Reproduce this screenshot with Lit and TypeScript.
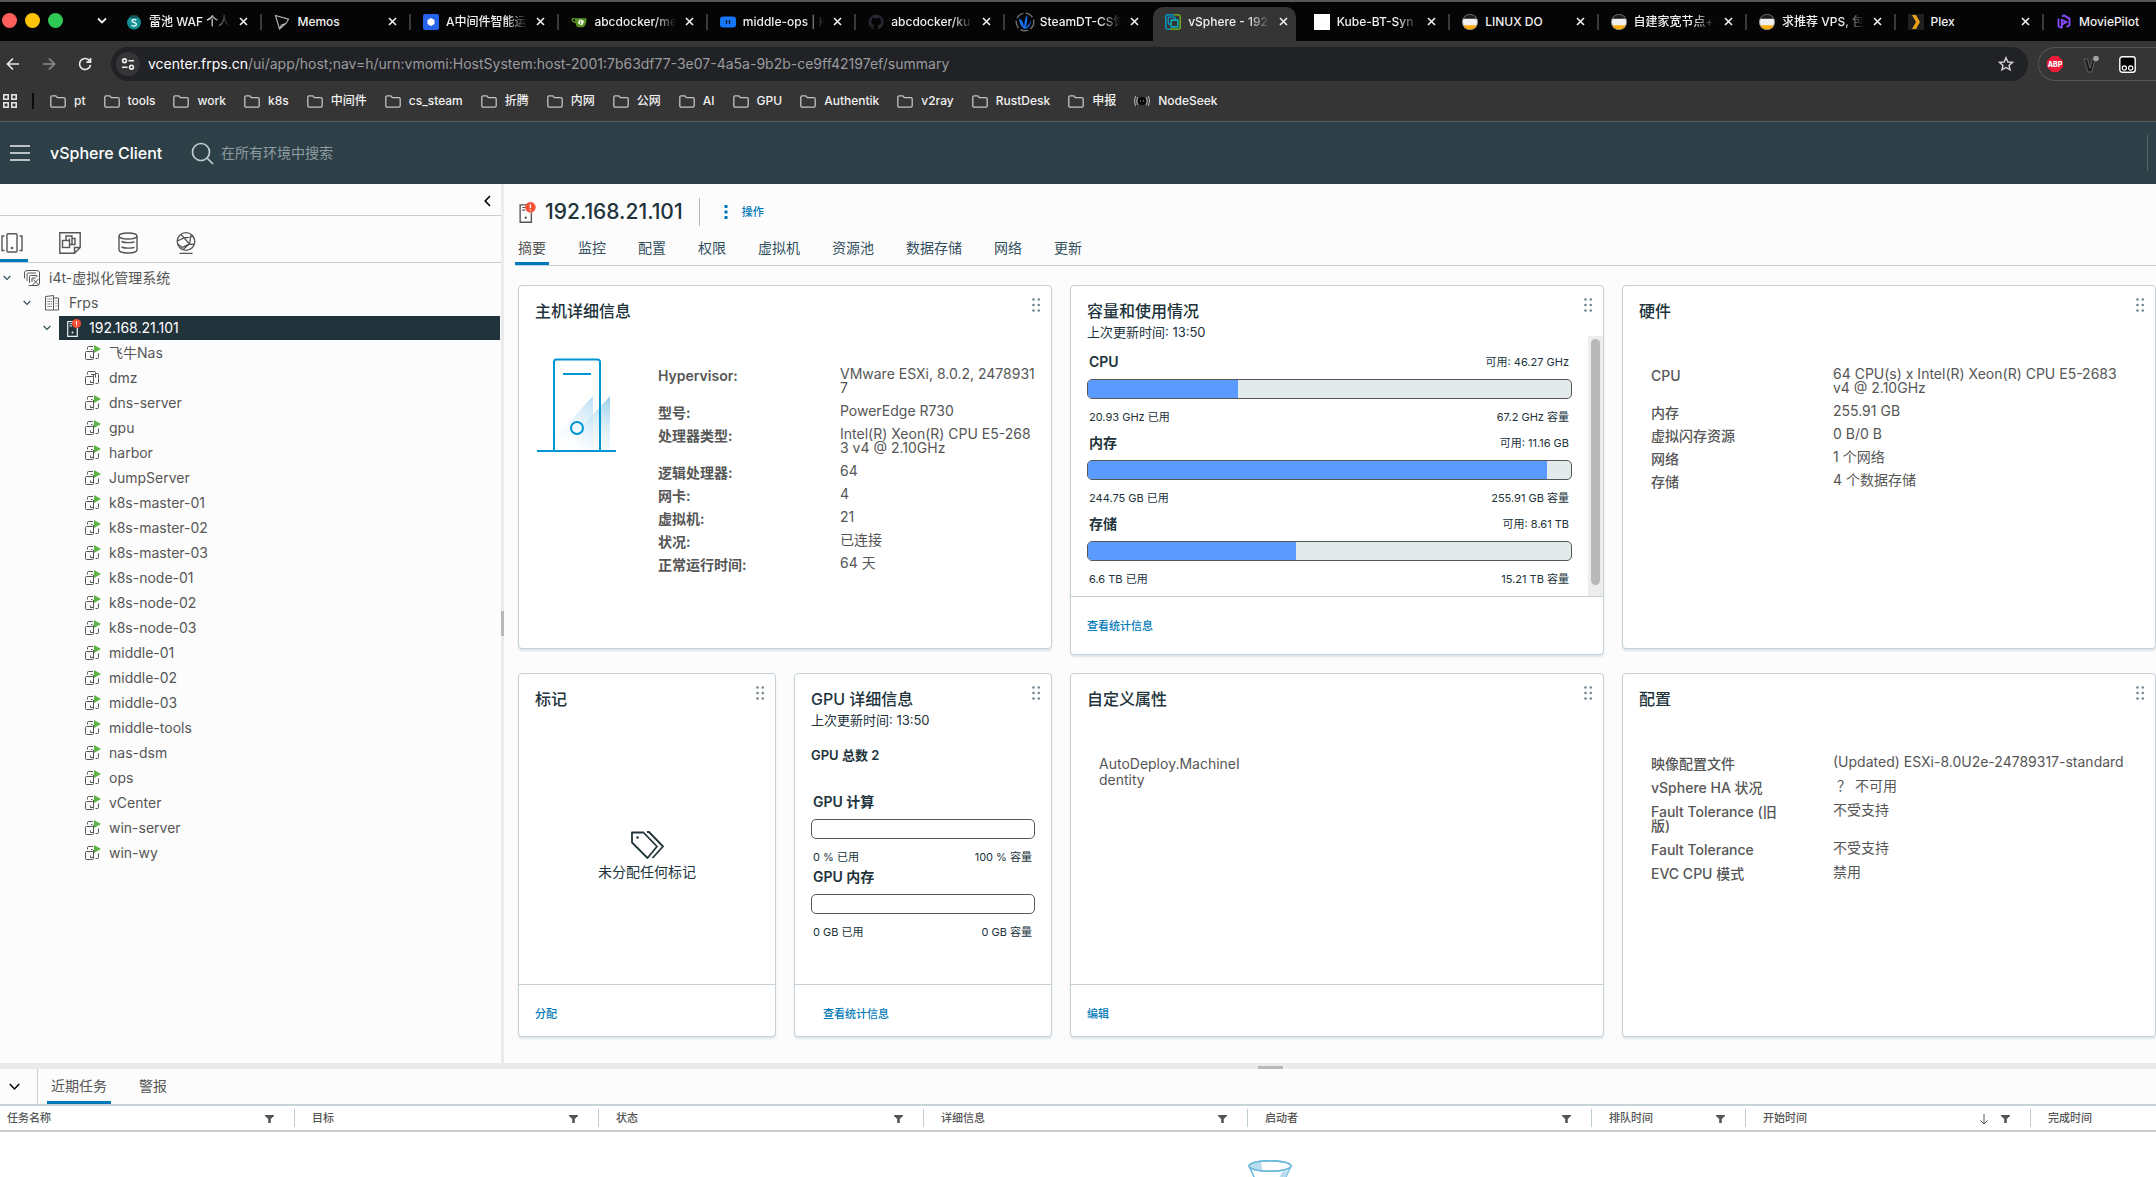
import { LitElement, html, css, svg, nothing, type TemplateResult } from "lit";
import { customElement, property } from "lit/decorators.js";
import { classMap } from "lit/directives/class-map.js";

const reset = css`
  * { box-sizing: border-box; }
  button { font: inherit; color: inherit; background: none; border: 0; padding: 0; margin: 0; text-align: left; cursor: pointer; }
  a { color: inherit; text-decoration: none; }
  input { font: inherit; color: inherit; background: none; border: 0; padding: 0; margin: 0; outline: 0; min-width: 0; }
  ul, dl, dd, dt, h1, h2, h3, p { margin: 0; padding: 0; list-style: none; font-size: inherit; font-weight: inherit; }
  svg { display: block; flex: none; }
`;

/* ---------- browser window ---------- */

const favicons: Record<string, TemplateResult> = {
  waf: html`<svg width="16" height="16" viewBox="0 0 16 16"><circle cx="8" cy="8.6" r="7" fill="#128f92"/><path d="M4 1.5h8l-1 2.4H5z" fill="#1c5557"/><path d="M10.4 6.2C9.2 5.2 6 5.2 6 7s4.4 1.300 4.400 3.300S7 12.600 5.500 11.200" fill="none" stroke="#d9f5f2" stroke-width="1.500"/></svg>`,
  memos: html`<svg width="16" height="16" viewBox="0 0 16 16" fill="none" stroke="#b9b9b9" stroke-width="1.1"><path d="M1.500 1.500 14.500 5.200 12 9.500 5.500 15 Z M5.500 15 7.500 11 12 9.500"/></svg>`,
  mid: html`<svg width="16" height="16" viewBox="0 0 16 16"><rect width="16" height="16" rx="2" fill="#2563eb"/><path d="M8 4l3.500 2v4L8 12l-3.500-2V6z" fill="#fff"/></svg>`,
  gitea: html`<svg width="16" height="16" viewBox="0 0 16 16"><path d="M4 4.200h11.500c0 5-1.500 9-4 9H7.500C5.500 13.200 4.800 10.500 4.500 9 1.800 9 .5 7.200.5 5.500S2 3.800 4 4.200z" fill="#5a9523"/><path d="M2 5.500c0 1 .8 2 2.200 2.200L4 5.300c-1-.2-2-.2-2 .2z" fill="#060606"/><rect x="7.600" y="5.800" width="4.800" height="4.800" rx="1" transform="rotate(25 10 8)" fill="#fff"/><path d="M9.800 6.500v3.500" stroke="#5a9523"/></svg>`,
  ops: html`<svg width="16" height="16" viewBox="0 0 16 16"><rect y="2.500" width="16" height="11" rx="3" fill="#1677ff"/><path d="M6.500 6v4M9.500 6v4" stroke="#04142c" stroke-width="1.300"/></svg>`,
  github: html`<svg width="16" height="16" viewBox="0 0 16 16"><path d="M8 .6a7.500 7.500 0 0 0-2.400 14.600c.4.100.5-.2.500-.4v-1.400c-2.100.5-2.500-.9-2.500-.9-.3-.9-.8-1.100-.8-1.100-.7-.5 0-.5 0-.5.800.1 1.200.8 1.200.8.700 1.200 1.800.8 2.200.6.100-.5.300-.8.500-1-1.700-.2-3.400-.8-3.400-3.700 0-.8.300-1.500.8-2-.1-.2-.3-1 .1-2 0 0 .6-.2 2.100.8a7 7 0 0 1 3.800 0c1.400-1 2.100-.8 2.100-.8.400 1 .1 1.800.1 2 .5.500.8 1.200.8 2 0 2.900-1.800 3.500-3.500 3.700.3.200.5.700.5 1.400v2.100c0 .2.100.5.500.4A7.500 7.500 0 0 0 8 .6z" fill="#24292f"/></svg>`,
  steam: html`<svg width="20" height="20" viewBox="0 0 20 20" fill="none"><circle cx="10" cy="10" r="8.800" stroke="#6f6f6f" stroke-width="1.400" stroke-dasharray="8 2.500"/><path d="M4 6.500c3 1 4.500 4 5 9 1-5 0-8 3.500-12.500C12 8 12.500 11 10.500 16c3-2 4-5 5.500-8-.5 5-2 8-6 9C6 15 4.500 11 4 6.500z" fill="#1677ff"/></svg>`,
  vsphere: html`<svg width="16" height="16" viewBox="0 0 16 16" fill="none" stroke-width="1.300"><path d="M9 .8H2.500Q.8.8.8 2.500v11Q.8 15.200 2.500 15.200H5" stroke="#00a4d6"/><path d="M9 .8h4.500q1.700 0 1.700 1.700v11q0 1.700-1.700 1.700H5" stroke="#78be20"/><rect x="3.200" y="3.200" width="7" height="7" rx="1" stroke="#0095d3"/><rect x="6" y="6" width="7" height="7" rx="1" stroke="#00c1d5" fill="#353535"/></svg>`,
  blank: html`<svg width="16" height="16" viewBox="0 0 16 16"><rect width="16" height="16" fill="#fff"/></svg>`,
  linuxdo: html`<svg width="16" height="16" viewBox="0 0 16 16"><circle cx="8" cy="8" r="7.800" fill="#efefef"/><path d="M.9 4.800a7.800 7.800 0 0 1 14.200 0z" fill="#1c1c1e"/><path d="M.9 11.200a7.800 7.800 0 0 0 14.200 0z" fill="#ffae0d"/><circle cx="8" cy="8" r="7.500" fill="none" stroke="#777" stroke-width=".6"/></svg>`,
  plex: html`<svg width="16" height="16" viewBox="0 0 16 16"><rect width="16" height="16" fill="#1f1f1f"/><path d="M4 1h4l4 7-4 7H4l4-7z" fill="#e8a21a"/></svg>`,
  pilot: html`<svg width="16" height="16" viewBox="0 0 16 16" fill="none" stroke="#8b4dff" stroke-width="1.800"><path d="M6 2.500 8 1.400l5.500 3.200v6.600L10.500 13"/><path d="M5 14 2.500 12V4.600"/><path d="M5.800 14.500V6l4.500 2-4.500 2.600"/></svg>`,
};

interface Tab { icon: string; title: string; active?: boolean }
const tabs: Tab[] = [
  { icon: "waf", title: "雷池 WAF 个人" },
  { icon: "memos", title: "Memos" },
  { icon: "mid", title: "A中间件智能运" },
  { icon: "gitea", title: "abcdocker/me" },
  { icon: "ops", title: "middle-ops | K" },
  { icon: "github", title: "abcdocker/ku" },
  { icon: "steam", title: "SteamDT-CS饰" },
  { icon: "vsphere", title: "vSphere - 192", active: true },
  { icon: "blank", title: "Kube-BT-Syn" },
  { icon: "linuxdo", title: "LINUX DO" },
  { icon: "linuxdo", title: "自建家宽节点+" },
  { icon: "linuxdo", title: "求推荐 VPS, 包" },
  { icon: "plex", title: "Plex" },
  { icon: "pilot", title: "MoviePilot" },
];
const bookmarks = ["pt", "tools", "work", "k8s", "中间件", "cs_steam", "折腾", "内网", "公网", "AI", "GPU", "Authentik", "v2ray", "RustDesk", "申报"];

@customElement("browser-frame")
export class BrowserFrame extends LitElement {
  static styles = [reset, css`
    :host { display: block; flex: none; font: 500 12px/16px Inter, "Noto Sans CJK SC", sans-serif; color: #f1f1f1; background: #353535; border-bottom: 1px solid #5b6063; }
    .strip { display: flex; align-items: flex-end; height: 41px; background: #050505; border-top: 2px solid #565656; overflow: hidden; }
    .window { display: flex; align-items: center; width: 114px; height: 39px; padding: 0 0 2px 2px; gap: 8px; flex: none; }
    .light { width: 15px; height: 15px; border-radius: 50%; }
    .red { background: #ff5f5b; } .amber { background: #fdc40a; } .green { background: #2fc956; }
    .more { margin-left: 26px; }
    .tabs { flex: 1; display: grid; grid-template-columns: repeat(13, minmax(0, 1fr)) 112px; }
    .tab { position: relative; height: 34px; display: flex; align-items: center; gap: 7px; padding: 0 14px 5px 12px; }
    .tab::after { content: ""; position: absolute; right: 0; top: 7px; width: 2px; height: 16px; background: #3a3a3a; }
    .tab:last-child::after, .tab.active::after, .tab.before::after { display: none; }
    .tab.active { background: #353535; border-radius: 10px 10px 0 0; margin-right: 6px; padding-right: 8px; }
    .fav { width: 16px; display: flex; justify-content: center; flex: none; }
    .label { flex: 1; min-width: 0; overflow: hidden; white-space: nowrap; mask-image: linear-gradient(90deg, #000 74%, transparent); }
    .label.whole { mask-image: none; }
    .close { flex: none; margin-left: 2px; padding: 4px 0; }
    .bar { display: flex; align-items: center; height: 46px; }
    .nav { display: flex; gap: 20px; padding-left: 5px; width: 111px; flex: none; }
    .omni { flex: 1; display: flex; align-items: center; height: 34px; border-radius: 17px; background: #212226; padding: 0 14px 0 5px; font-size: 14px; font-weight: 400; }
    .site { width: 24px; height: 24px; border-radius: 50%; background: #353535; display: grid; place-items: center; margin-right: 8px; flex: none; }
    .url { flex: 1; color: #9a9b9e; white-space: nowrap; }
    .url b { color: #fff; font-weight: 400; }
    .ext { display: flex; align-items: center; gap: 20px; width: 118px; height: 34px; margin-left: 10px; padding-left: 8px; border: 1px solid #565656; border-right: 0; border-radius: 17px 0 0 17px; flex: none; }
    .marks { display: flex; align-items: center; height: 34px; gap: 18px; padding: 0 0 6px 3px; }
    .apps { display: flex; align-items: center; gap: 15px; }
    .apps::after { content: ""; width: 2px; height: 16px; background: #0c0c0c; }
    .mark { display: flex; align-items: center; gap: 8px; }
    .marks .apps { margin-right: -2px; }
  `];

  private tab(t: Tab, i: number) {
    const whole = ["Memos", "LINUX DO", "Plex", "MoviePilot"].includes(t.title);
    return html`<div class=${classMap({ tab: true, active: !!t.active, before: !!tabs[i + 1]?.active })} role="tab">
      <span class="fav">${favicons[t.icon]}</span>
      <span class=${classMap({ label: true, whole })}>${t.title}</span>
      ${i === tabs.length - 1 ? nothing : html`<button class="close" aria-label="关闭"><svg width="9" height="9" viewBox="0 0 9 9" stroke="#f1f1f1" stroke-width="1.600"><path d="M1 1l7 7M8 1 1 8"/></svg></button>`}
    </div>`;
  }

  render() {
    return html`
      <div class="strip">
        <div class="window">
          <span class="light red"></span><span class="light amber"></span><span class="light green"></span>
          <button class="more" aria-label="搜索标签页"><svg width="10" height="8" viewBox="0 0 10 8" fill="none" stroke="#f1f1f1" stroke-width="1.800"><path d="M1 1.500 5 5.500 9 1.500"/></svg></button>
        </div>
        <div class="tabs" role="tablist">${tabs.map((t, i) => this.tab(t, i))}</div>
      </div>
      <div class="bar">
        <div class="nav">
          <button aria-label="后退"><svg width="16" height="16" viewBox="0 0 16 16" fill="none" stroke="#e8e8e8" stroke-width="1.700"><path d="M14 8H2.500M8 2.500 2.500 8 8 13.500"/></svg></button>
          <button aria-label="前进"><svg width="16" height="16" viewBox="0 0 16 16" fill="none" stroke="#8d8d8d" stroke-width="1.700"><path d="M2 8h11.500M8 2.500 13.500 8 8 13.500"/></svg></button>
          <button aria-label="重新加载"><svg width="16" height="16" viewBox="0 0 16 16" fill="none" stroke="#e8e8e8" stroke-width="1.700"><path d="M12.800 5.200A5.500 5.500 0 1 0 13.500 8.800M13.500 2v4.200H9.300"/></svg></button>
        </div>
        <div class="omni">
          <button class="site" aria-label="网站信息"><svg width="14" height="14" viewBox="0 0 14 14" fill="none" stroke="#f1f1f1" stroke-width="1.600"><circle cx="3.500" cy="3.800" r="1.900"/><path d="M7.500 3.800H13M1 10.200h5.500"/><circle cx="10.500" cy="10.200" r="1.900"/></svg></button>
          <span class="url"><b>vcenter.frps.cn</b>/ui/app/host;nav=h/urn:vmomi:HostSystem:host-2001:7b63df77-3e07-4a5a-9b2b-ce9ff42197ef/summary</span>
          <button aria-label="添加书签"><svg width="16" height="16" viewBox="0 0 16 16" fill="none" stroke="#d6d6d6" stroke-width="1.400"><path d="M8 1.800 9.900 6l4.600.4-3.500 3 1.100 4.500L8 11.500l-4.100 2.400L5 9.400l-3.500-3L6.100 6z"/></svg></button>
        </div>
        <div class="ext">
          <svg width="16" height="16" viewBox="0 0 16 16"><path d="M5 0h6l5 5v6l-5 5H5l-5-5V5z" fill="#ee1c3a"/><text x="8" y="10.500" text-anchor="middle" font-size="7" font-weight="800" fill="#fff">ABP</text></svg>
          <svg width="16" height="18" viewBox="0 0 16 18"><path d="M1 4h3.500L7 13l2.500-9H12L8.800 17H5z" fill="#1b1b1b" stroke="#7a7a7a" stroke-width=".7"/><circle cx="13" cy="3.500" r="2.800" fill="#a3a3a3"/></svg>
          <svg width="17" height="17" viewBox="0 0 17 17"><rect x=".8" y=".8" width="15.400" height="15.400" rx="2.500" fill="#000" stroke="#fff" stroke-width="1.400"/><circle cx="5.300" cy="12" r="2.100" fill="none" stroke="#fff" stroke-width="1.200"/><circle cx="11.700" cy="12" r="2.100" fill="none" stroke="#fff" stroke-width="1.200"/></svg>
        </div>
      </div>
      <div class="marks">
        <button class="apps" aria-label="应用"><svg width="14" height="14" viewBox="0 0 14 14" fill="none" stroke="#e3e3e3" stroke-width="1.600"><rect x=".8" y=".8" width="4.400" height="4.400"/><rect x="8.800" y=".8" width="4.400" height="4.400"/><rect x=".8" y="8.800" width="4.400" height="4.400"/><rect x="8.800" y="8.800" width="4.400" height="4.400"/></svg></button>
        ${bookmarks.map((b) => html`<button class="mark"><svg width="16" height="13" viewBox="0 0 16 13" fill="none" stroke="#c4c4c4" stroke-width="1.300"><path d="M.8 2.200Q.8.800 2.200.800H5.800L7.400 2.600H13.800Q15.200 2.600 15.200 4v6.800q0 1.400-1.400 1.400H2.200Q.8 12.200.8 10.800z"/></svg>${b}</button>`)}
        <button class="mark"><svg width="16" height="12" viewBox="0 0 16 12" fill="none" stroke="#b8b8b8" stroke-width="1"><circle cx="8" cy="6" r="4" fill="#080808" stroke="none"/><path d="M3.500 2q-1.500 4 0 8M1.500 1q-2 5 0 10M12.500 2q1.500 4 0 8M14.500 1q2 5 0 10"/><path d="M6.500 5.500v1M9.500 5.500v1"/></svg>NodeSeek</button>
      </div>`;
  }
}

/* ---------- inventory ---------- */

const chevron = html`<svg width="8" height="6" viewBox="0 0 8 6" fill="none" stroke="#324f5c" stroke-width="1.200"><path d="M.6 1 4 4.400 7.400 1"/></svg>`;

const hostIcon = (stroke: string, w: number, h: number) => html`<svg width=${w} height=${h} viewBox="0 0 14 18" fill="none" stroke=${stroke}>
  <path d="M7.500 2.500H.7v14.800h9.600V9" stroke-width="1.200"/><path d="M2.500 4.700h2.500M2.500 7h2.500" stroke-width="1"/><circle cx="5.500" cy="13.500" r="1" fill=${stroke} stroke="none"/>
  <circle cx="9.500" cy="4.500" r="4.500" fill="#f54f34" stroke="none"/><path d="M9.500 2v3.200M9.500 6.200v1.100" stroke="#fff" stroke-width="1.100"/></svg>`;

const vmIcon = (on: boolean) => html`<svg width="16" height="16" viewBox="0 0 16 16" fill="none" stroke="#565656" stroke-width="1">
  <rect x=".5" y="6.500" width="8" height="8" rx="1"/>
  <path d="M2.500 4.500V2.500Q2.500 1.500 3.500 1.500H8M6 4.500h1.500"/><path d="M5.500 10.500v2h3M8.500 5v7.500"/><path d="M10.500 13.500h2q1 0 1-1V8.500"/>
  ${on ? svg`<path d="M9 0l7 4-7 4z" fill="#5eb343" stroke="none"/>` : svg`<path d="M8 1.500h1.500q1 0 1 1V4M7 4.500h3.500v3M10.500 3.500h2q1 0 1 1v4"/>`}</svg>`;

const vms = ["飞牛Nas", "dmz", "dns-server", "gpu", "harbor", "JumpServer", "k8s-master-01", "k8s-master-02", "k8s-master-03", "k8s-node-01", "k8s-node-02", "k8s-node-03", "middle-01", "middle-02", "middle-03", "middle-tools", "nas-dsm", "ops", "vCenter", "win-server", "win-wy"];

@customElement("inventory-tree")
export class InventoryTree extends LitElement {
  static styles = [reset, css`
    :host { display: flex; flex-direction: column; width: 501px; flex: none; color: #565656; font-size: 14px; line-height: 20px; }
    .collapse { display: flex; justify-content: flex-end; align-items: center; height: 32px; padding: 2px 10px 0 0; border-bottom: 1px solid #ccc; }
    .kinds { display: flex; gap: 30px; height: 47px; border-bottom: 1px solid #c1cdd4; }
    .kind { width: 28px; display: flex; align-items: center; justify-content: center; padding: 11px 4px 0 0; border-bottom: 3px solid transparent; }
    .kind.on { border-bottom-color: #0079b8; }
    .row { display: flex; align-items: center; height: 25px; padding-top: 1px; }
    .tree { padding-top: 2px; }
    .l0 { padding-left: 3px; } .l1 { padding-left: 23px; } .l2 { padding-left: 43px; } .l3 { padding-left: 85px; }
    .toggle { width: 16px; flex: none; }
    .pick { display: flex; align-items: center; flex: 1; gap: 9px; height: 24px; padding-left: 5px; margin-right: 1px; }
    .l1 .pick { padding-left: 6px; }
    .l2 .pick { padding-left: 8px; gap: 8px; }
    .l3 .pick { padding-left: 0; gap: 8px; }
    .pick.sel { background: #21333b; color: #fff; }
  `];

  render() {
    return html`
      <div class="collapse"><button aria-label="折叠"><svg width="7" height="12" viewBox="0 0 7 12" fill="none" stroke="#000" stroke-width="1.600"><path d="M6 1 1.200 6 6 11"/></svg></button></div>
      <div class="kinds">
        <button class="kind on" aria-label="主机和群集"><svg width="24" height="22" viewBox="0 0 24 22" fill="none" stroke="#565656" stroke-width="1.400"><rect x="7" y="1.700" width="10" height="18.300" rx="1"/><path d="M4.500 4H2v14.500h2.500M19.500 4H22v14.500h-2.500"/><circle cx="12" cy="16" r="1.300" fill="#565656" stroke="none"/></svg></button>
        <button class="kind" aria-label="虚拟机和模板"><svg width="22" height="22" viewBox="0 0 22 22" fill="none" stroke="#565656" stroke-width="1.400"><path d="M.8.800H21.200V15.500L15.500 21.200H.8zM15.500 21.200V15.500h5.700"/><rect x="3.500" y="8.500" width="7" height="7"/><path d="M7 8.500V4h6v8.500h-2.500M13 6.500h3v6h-3M10.500 8.500V6.500"/></svg></button>
        <button class="kind" aria-label="存储"><svg width="20" height="22" viewBox="0 0 20 22" fill="none" stroke="#565656" stroke-width="1.400"><ellipse cx="10" cy="4" rx="9" ry="3"/><path d="M1 4v14c0 1.700 4 3 9 3s9-1.300 9-3V4M3.500 9.500c3 1.500 10 1.500 13 .3M3.500 15c3 1.500 10 1.500 13 .3"/></svg></button>
        <button class="kind" aria-label="网络"><svg width="20" height="22" viewBox="0 0 20 22" fill="none" stroke="#565656" stroke-width="1.300"><circle cx="10" cy="9.500" r="8.800"/><path d="M5 2.500 13.500 12 7 17.500M1.500 9 8 6l9-1.500M2 12l4 3.500 7.500-3.500L18 12.500M13.500 12 15 2.800M3.500 21.300h13"/></svg></button>
      </div>
      <div class="tree" role="tree">
        <div class="row l0" role="treeitem"><button class="toggle" aria-label="展开">${chevron}</button><a class="pick" href="#vc"><svg width="16" height="16" viewBox="0 0 16 16" fill="none" stroke="#565656" stroke-width="1"><rect x=".5" y=".5" width="15" height="15" rx="2.500" stroke-dasharray="36 10"/><path d="M12 3H4.500Q3 3 3 4.500V11M13 7V5.500H6.500q-1 0-1 1V13M8 8h4M8 8v4"/><path d="M8.500 15 14.500 9M9.500 9.500l5 5.500"/></svg>i4t-虚拟化管理系统</a></div>
        <div class="row l1" role="treeitem"><button class="toggle" aria-label="展开">${chevron}</button><a class="pick" href="#frps"><svg width="15" height="16" viewBox="0 0 15 16" fill="none" stroke="#565656" stroke-width="1"><path d="M.5 1.500 8.500.5v14.500H.5zM8.500 3h5v12h-5"/><path d="M2.500 4h4.500M2.500 6.500h4.500M2.500 9h4.500M2.500 11.500h4.500M10.500 6h2M10.500 8.500h2M10.500 11h2" stroke-dasharray="1 .7"/></svg>Frps</a></div>
        <div class="row l2" role="treeitem"><button class="toggle" aria-label="展开">${chevron}</button><a class="pick sel" href="#host">${hostIcon("#e8eef0", 14, 18)}192.168.21.101</a></div>
        ${vms.map((v) => html`<div class="row l3" role="treeitem"><a class="pick" href="#vm">${vmIcon(v !== "dmz")}${v}</a></div>`)}
      </div>`;
  }
}

/* ---------- cards ---------- */

@customElement("summary-card")
export class SummaryCard extends LitElement {
  @property() heading = "";
  @property() stamp = "";
  @property() action = "";
  @property({ type: Boolean, attribute: "scrollbar" }) scrollbar = false;
  @property({ type: Boolean, attribute: "indent-action" }) indentAction = false;

  static styles = [reset, css`
    :host { display: flex; flex-direction: column; min-height: 364px; background: #fff; border: 1px solid #c5d0d7; border-radius: 4px; box-shadow: 0 2px 2px #dfe5e9; color: #21333b; }
    .head { display: flex; justify-content: space-between; padding: 13px 11px 0 16px; height: 50px; flex: none; }
    h2 { font-size: 16px; line-height: 24px; font-weight: 500; }
    .sub { font-size: 13px; line-height: 18px; }
    .grip { height: 14px; margin: -1px 0 0; }
    .body { flex: 1; display: flex; }
    .content { flex: 1; min-width: 0; display: flex; flex-direction: column; }
    .track { width: 15px; background: #ededed; padding: 3px; display: flex; }
    .thumb { flex: 1; border-radius: 5px; background: #b9b9b9; margin-bottom: 8px; }
    .foot { display: flex; align-items: center; height: 52px; padding: 6px 16px 0; border-top: 1px solid #c5d0d7; font-size: 11px; line-height: 16px; font-weight: 500; color: #0079b8; }
    .foot.tall { height: 58px; padding-top: 0; }
    .foot.indent { padding-left: 28px; }
  `];

  render() {
    return html`
      <div class="head"><div><h2>${this.heading}</h2>${this.stamp ? html`<p class="sub">上次更新时间: ${this.stamp}</p>` : nothing}</div>
        <button class="grip" aria-label="移动"><svg width="8" height="14" viewBox="0 0 8 14" fill="#73858f">${[1.5, 7, 12.5].map((y) => svg`<circle cx="1.500" cy=${y} r="1.300"/><circle cx="6.800" cy=${y} r="1.300"/>`)}</svg></button></div>
      <div class="body"><div class="content"><slot></slot></div>${this.scrollbar ? html`<div class="track"><span class="thumb"></span></div>` : nothing}</div>
      ${this.action ? html`<div class=${classMap({ foot: true, tall: this.scrollbar, indent: this.indentAction })}><a href="#action">${this.action}</a></div>` : nothing}`;
  }
}

@customElement("usage-meter")
export class UsageMeter extends LitElement {
  @property() name = "";
  @property() free = "";
  @property() used = "";
  @property() total = "";
  @property({ type: Number }) percent = 0;

  static styles = [reset, css`
    :host { display: block; color: #21333b; font-size: 11px; line-height: 16px; }
    .line { display: flex; justify-content: space-between; align-items: center; padding: 0 3px 0 2px; }
    .name { font-size: 14px; line-height: 18px; font-weight: 600; }
    .bar { height: 20px; margin: 8px 0 10px; border: 1px solid #565656; border-radius: 5px; background: #e3eaec; overflow: hidden; }
    .bar.empty { background: #fff; }
    .fill { height: 100%; background: #5b9aff; }
  `];

  render() {
    return html`<div class="line"><span class="name">${this.name}</span><span>${this.free}</span></div>
      <div class=${classMap({ bar: true, empty: !this.percent })} role="meter" aria-label=${this.name} aria-valuenow=${this.percent}><div class="fill" style="width:${this.percent}%"></div></div>
      <div class="line"><span>${this.used}</span><span>${this.total}</span></div>`;
  }
}

/* ---------- recent tasks ---------- */

const columns = [
  { name: "任务名称", w: 295 }, { name: "目标", w: 304 }, { name: "状态", w: 325 }, { name: "详细信息", w: 324 },
  { name: "启动者", w: 344 }, { name: "排队时间", w: 154 }, { name: "开始时间", w: 285, sorted: true }, { name: "完成时间", w: 125, last: true },
];

@customElement("task-panel")
export class TaskPanel extends LitElement {
  static styles = [reset, css`
    :host { display: block; flex: none; height: 114px; overflow: hidden; background: #fff; }
    .split { height: 6px; background: #ebebeb; display: flex; justify-content: center; align-items: flex-end; padding-left: 385px; }
    .knob { width: 25px; height: 3px; background: #b8b8b8; }
    .tabs { display: flex; height: 37px; background: #fcfcfc; border-bottom: 2px solid #c8d3d8; color: #565656; font-size: 14px; line-height: 20px; }
    .fold { width: 38px; padding-left: 9px; border-right: 1px solid #ccc; margin-right: 9px; }
    .tab { padding: 2px 4px 0; border-bottom: 3px solid transparent; margin-right: 24px; }
    .tab.on { border-bottom-color: #0079b8; }
    table { width: 100%; table-layout: fixed; border-collapse: collapse; border-bottom: 2px solid #ccc; font-size: 11px; line-height: 16px; color: #565656; }
    th { padding: 3px 0; font-weight: 500; text-align: left; }
    .cell { display: flex; align-items: center; justify-content: space-between; height: 18px; padding: 0 20px 0 17px; border-right: 1px solid #c1cdd4; }
    th:first-child .cell { padding-left: 7px; }
    th:last-child .cell { border-right: 0; }
    .tools { display: flex; align-items: center; gap: 12px; padding-top: 2px; }
    .empty { display: flex; justify-content: center; padding: 28px 0 0 384px; }
  `];

  render() {
    return html`
      <div class="split"><span class="knob"></span></div>
      <div class="tabs"><button class="fold" aria-label="折叠"><svg width="11" height="8" viewBox="0 0 11 8" fill="none" stroke="#000" stroke-width="1.500"><path d="M.8 1 5.500 6 10.200 1"/></svg></button>
        <button class="tab on">近期任务</button><button class="tab">警报</button></div>
      <table>
        <colgroup>${columns.map((c) => html`<col width=${c.w}>`)}</colgroup>
        <thead><tr>${columns.map((c) => html`<th><div class="cell"><span>${c.name}</span>${c.last ? nothing : html`<span class="tools">
          ${c.sorted ? html`<svg width="10" height="11" viewBox="0 0 10 11" fill="none" stroke="#565656"><path d="M5 0v10M1.500 6.500 5 10l3.500-3.500"/></svg>` : nothing}
          <button aria-label="筛选"><svg width="9" height="8" viewBox="0 0 9 8" fill="#565656"><path d="M0 0h9v1L5.800 4v4H3.200V4L0 1z"/></svg></button></span>`}</div></th>`)}</tr></thead>
      </table>
      <div class="empty"><svg width="44" height="44" viewBox="0 0 44 44" fill="none" stroke="#6db9dc" stroke-width="1.500">
        <path d="M1 6 14 34h16L43 6" fill="#fff"/><path d="M34 12 26 28h6l9-18z" fill="#b9dcee" stroke="none"/><ellipse cx="22" cy="6" rx="21" ry="5.300" fill="#fff"/><path d="M13 1.800C5 2.500 1.500 4.500 1.500 6s4 4.200 13 4.900z" fill="#b9dcee" stroke="none"/><ellipse cx="22" cy="6" rx="21" ry="5.300"/></svg></div>`;
  }
}

/* ---------- page ---------- */

type Row = [string, string | TemplateResult];

const hostRows: Row[] = [
  ["Hypervisor:", "VMware ESXi, 8.0.2, 24789317"], ["型号:", "PowerEdge R730"], ["处理器类型:", "Intel(R) Xeon(R) CPU E5-2683 v4 @ 2.10GHz"],
  ["逻辑处理器:", "64"], ["网卡:", "4"], ["虚拟机:", "21"], ["状况:", "已连接"], ["正常运行时间:", "64 天"],
];
const hardwareRows: Row[] = [
  ["CPU", "64 CPU(s) x Intel(R) Xeon(R) CPU E5-2683 v4 @ 2.10GHz"], ["内存", "255.91 GB"], ["虚拟闪存资源", "0 B/0 B"], ["网络", "1 个网络"], ["存储", "4 个数据存储"],
];
const configRows: Row[] = [
  ["映像配置文件", "(Updated) ESXi-8.0U2e-24789317-standard"], ["vSphere HA 状况", html`<span class="unknown">？</span> 不可用`], ["Fault Tolerance (旧版)", "不受支持"], ["Fault Tolerance", "不受支持"], ["EVC CPU 模式", "禁用"],
];
const pageTabs = ["摘要", "监控", "配置", "权限", "虚拟机", "资源池", "数据存储", "网络", "更新"];

@customElement("app-root")
export class AppRoot extends LitElement {
  static styles = [reset, css`
    :host { display: flex; flex-direction: column; height: 100vh; overflow: hidden; background: #fcfcfc; font: 400 14px/20px Inter, "Noto Sans CJK SC", sans-serif; color: #565656; }
    .top { display: flex; align-items: center; height: 62px; flex: none; background: #2d4048; color: #fff; padding: 0 8px 0 10px; }
    .product { font-size: 16px; font-weight: 500; margin-left: 20px; width: 141px; white-space: nowrap; }
    .search { display: flex; align-items: center; gap: 7px; flex: 1; height: 36px; border-right: 1px solid #56666d; }
    .search input { flex: 1; }
    .search input::placeholder { color: #8f9ba0; opacity: 1; }
    .work { display: flex; flex: 1; min-height: 0; }
    .divider { width: 3px; background: #ebebeb; flex: none; display: flex; align-items: center; }
    .divider span { width: 3px; height: 25px; background: #b8b8b8; }
    main { flex: 1; min-width: 0; overflow: hidden; }
    .title { display: flex; align-items: center; height: 46px; padding: 10px 0 0 15px; color: #21333b; }
    .title h1 { font-size: 21px; line-height: 28px; font-weight: 500; margin-left: 9px; padding-right: 16px; border-right: 1px solid #b5b5b5; }
    .ops { display: flex; align-items: center; gap: 14px; margin-left: 24px; font-size: 11px; font-weight: 500; color: #0079b8; }
    .tabs { display: flex; gap: 26px; margin-left: 11px; height: 36px; border-bottom: 1px solid #c5d0d7; color: #324f5c; }
    .tabs a { height: 35px; padding: 8px 3px 0; border-bottom: 3px solid transparent; }
    .tabs a.on { color: #565656; border-bottom-color: #0079b8; }
    .cards { display: grid; grid-template-columns: repeat(12, minmax(0, 1fr)); gap: 18px; padding: 19px 0 0 14px; align-items: start; }
    .wide { grid-column: span 4; }
    .half { grid-column: span 2; }
    .host { display: flex; padding: 22px 14px 0 18px; gap: 41px; }
    .rows { flex: 1; display: flex; flex-direction: column; gap: 9px; line-height: 14px; color: #565656; }
    .hw { padding: 31px 26px 0 28px; }
    .rows.config { gap: 10px; }
    .pair { display: flex; }
    .pair dt { width: 182px; padding: 2px 52px 0 0; margin-bottom: -2px; flex: none; font-weight: 500; }
    .pair dd { flex: 1; }
    .unknown { margin-left: 4px; }
    .host .pair dt { font-weight: 600; padding-right: 0; }
    .host dd { word-break: break-all; }
    .host .rows { padding-top: 9px; }
    .meters { display: flex; flex-direction: column; gap: 9px; padding: 17px 16px 9px; }
    .notag { flex: 1; display: flex; flex-direction: column; align-items: center; justify-content: center; gap: 3px; padding-top: 4px; }
    .gpu { padding: 21px 16px 0; display: flex; flex-direction: column; gap: 3px; }
    .gpu p { font-size: 13px; font-weight: 600; line-height: 20px; margin-bottom: 25px; }
    .attr { padding: 32px 28px 0; width: 202px; line-height: 16px; word-break: break-all; color: #565656; }
  `];

  private rows(list: Row[]) {
    return list.map(([k, v]) => html`<div class="pair"><dt>${k}</dt><dd>${v}</dd></div>`);
  }

  render() {
    return html`
      <browser-frame></browser-frame>
      <header class="top">
        <button aria-label="菜单"><svg width="20" height="16" viewBox="0 0 20 16" stroke="#e9edef" stroke-width="1.300"><path d="M0 1h20M0 8h20M0 15h20"/></svg></button>
        <span class="product">vSphere Client</span>
        <label class="search"><svg width="23" height="23" viewBox="0 0 23 23" fill="none" stroke="#c5cdd0" stroke-width="1.700"><circle cx="10" cy="10" r="8.500"/><path d="m16 16 6 6"/></svg><input type="search" placeholder="在所有环境中搜索" aria-label="搜索"></label>
      </header>
      <div class="work">
        <inventory-tree></inventory-tree>
        <div class="divider"><span></span></div>
        <main>
          <div class="title">${hostIcon("#565656", 17, 21)}<h1>192.168.21.101</h1>
            <button class="ops"><svg width="4" height="16" viewBox="0 0 4 16" fill="#0079b8"><path d="M.5 1h3v3h-3zM.5 6.500h3v3h-3zM.5 12h3v3h-3z"/></svg>操作</button></div>
          <nav class="tabs">${pageTabs.map((t, i) => html`<a href="#tab" class=${i ? "" : "on"}>${t}</a>`)}</nav>
          <div class="cards">
            <summary-card class="wide" heading="主机详细信息"><div class="host">
              <svg width="80" height="96" viewBox="0 0 80 96" fill="none" stroke="#0095d3" stroke-width="2">
                <defs><linearGradient id="g" x1="1" y1="0" x2=".3" y2="1"><stop offset="0" stop-color="#89c8ea"/><stop offset="1" stop-color="#fff" stop-opacity="0"/></linearGradient></defs>
                <path d="M5 93 56 38v55z" fill="url(#g)" fill-opacity=".6" stroke="none"/><path d="M22 93 73 38v55z" fill="url(#g)" stroke="none" fill-opacity=".9"/>
                <path d="M17 93V4q0-2.500 2.500-2.500h41Q63 1.500 63 4v89"/><path d="M26 16h28M0 93h79"/><circle cx="40" cy="70" r="6"/></svg>
              <dl class="rows">${this.rows(hostRows)}</dl></div></summary-card>
            <summary-card class="wide" heading="容量和使用情况" stamp="13:50" action="查看统计信息" scrollbar><div class="meters">
              <usage-meter name="CPU" free="可用: 46.27 GHz" used="20.93 GHz 已用" total="67.2 GHz 容量" percent="31"></usage-meter>
              <usage-meter name="内存" free="可用: 11.16 GB" used="244.75 GB 已用" total="255.91 GB 容量" percent="95"></usage-meter>
              <usage-meter name="存储" free="可用: 8.61 TB" used="6.6 TB 已用" total="15.21 TB 容量" percent="43"></usage-meter></div></summary-card>
            <summary-card class="wide" heading="硬件"><dl class="rows hw">${this.rows(hardwareRows)}</dl></summary-card>
            <summary-card class="half" heading="标记" action="分配"><div class="notag">
              <svg width="33" height="28" viewBox="0 0 33 28" fill="none" stroke="#21333b" stroke-width="1.800" stroke-linejoin="round"><path d="M1 1.500h11.500L26 15.500 16.500 27 1 11.500z"/><path d="M16 1h2L32 15.500 21.500 27"/><circle cx="6.500" cy="6.500" r="1.300" fill="#21333b" stroke="none"/></svg>未分配任何标记</div></summary-card>
            <summary-card class="half" heading="GPU 详细信息" stamp="13:50" action="查看统计信息" indent-action><div class="gpu">
              <p>GPU 总数 2</p>
              <usage-meter name="GPU 计算" used="0 % 已用" total="100 % 容量"></usage-meter>
              <usage-meter name="GPU 内存" used="0 GB 已用" total="0 GB 容量"></usage-meter></div></summary-card>
            <summary-card class="wide" heading="自定义属性" action="编辑"><div class="attr">AutoDeploy.MachineIdentity</div></summary-card>
            <summary-card class="wide" heading="配置"><dl class="rows hw config">${this.rows(configRows)}</dl></summary-card>
          </div>
        </main>
      </div>
      <task-panel></task-panel>`;
  }
}
